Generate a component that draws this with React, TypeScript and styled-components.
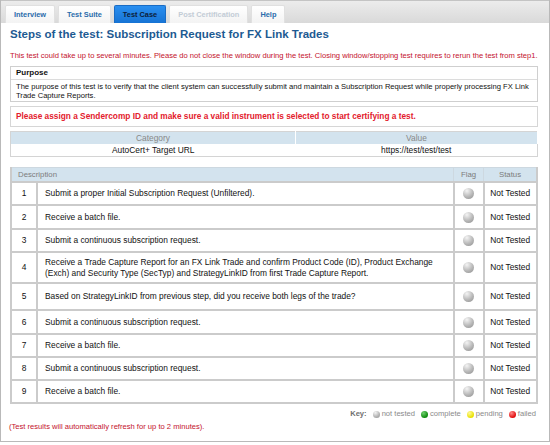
import styled, { createGlobalStyle } from 'styled-components';

const GlobalStyle = createGlobalStyle`
  html, body {
    margin: 0;
    padding: 0;
    background: #fff;
  }
  body {
    font-family: "Liberation Sans", Arial, sans-serif;
    color: #111;
  }
`;

const Frame = styled.div`
  width: 550px;
  height: 442px;
  box-sizing: border-box;
  border: 1px solid #b9b9b9;
  border-top: none;
  display: flex;
  flex-direction: column;
  overflow: hidden;
`;

const TabBar = styled.div`
  flex-shrink: 0;
  height: 23px;
  box-sizing: border-box;
  padding: 4px 0 0 4px;
  display: flex;
  gap: 3px;
  align-items: stretch;
  background: linear-gradient(#ececec, #d9d9d9);
  border-top: 1px solid #c4c4c4;
`;

const Tab = styled.div<{ $state?: 'active' | 'disabled' }>`
  padding: 0 8px;
  display: flex;
  align-items: center;
  font-size: 7.4px;
  font-weight: bold;
  border-radius: 2px 2px 0 0;
  color: ${(p) => (p.$state === 'active' ? '#0c1d3a' : p.$state === 'disabled' ? '#c3ccd6' : '#2b6cab')};
  background: ${(p) => (p.$state === 'active' ? 'linear-gradient(#2a8ff0, #1673d4)' : 'linear-gradient(#ffffff, #f3f3f3)')};
  border: 1px solid ${(p) => (p.$state === 'active' ? '#1a6cc4' : '#e0e0e0')};
  border-bottom: none;
`;

const Content = styled.div`
  flex: 1;
  padding: 0 11px 0 9px;
  display: flex;
  flex-direction: column;
`;

const Title = styled.h1`
  margin: 4px 0 0 0;
  font-size: 11.5px;
  font-weight: bold;
  color: #1d5a92;
  line-height: 14px;
`;

const Warning = styled.p`
  margin: 10px 0 0 0;
  font-size: 7.6px;
  line-height: 10px;
  color: #c4122d;
`;

const Box = styled.div`
  margin-top: 5px;
  border: 1px solid #cfcfcf;
`;

const BoxHead = styled.div`
  font-size: 8px;
  font-weight: bold;
  padding: 1px 5px;
  line-height: 10px;
  border-bottom: 1px solid #dcdcdc;
`;

const BoxText = styled.div`
  font-size: 7.6px;
  line-height: 9px;
  padding: 2px 5px 1px;
`;

const Notice = styled.div`
  margin-top: 4px;
  border: 1px solid #d6d6d6;
  padding: 4px 5px;
  font-size: 8.3px;
  font-weight: bold;
  line-height: 11px;
  color: #e3202c;
`;

const InfoTable = styled.table`
  margin-top: 4px;
  width: 100%;
  border-collapse: collapse;
  border: 1px solid #d4d4d4;
  font-size: 8.4px;
`;

const InfoHead = styled.th<{ $w?: number }>`
  background: #d3e3ee;
  color: #888;
  font-weight: normal;
  height: 12px;
  padding: 0;
  border-right: 1px solid #fff;
  width: ${(p) => (p.$w ? `${p.$w}px` : 'auto')};
`;

const InfoCell = styled.td`
  text-align: center;
  height: 12px;
  padding: 0;
`;

const Steps = styled.table`
  margin-top: 10px;
  width: 100%;
  border-collapse: collapse;
  font-size: 8.4px;
  border: 2px solid #cbcbcb;
  border-top: none;
`;

const StepHead = styled.th<{ $align?: string; $w?: number }>`
  background: #d3e3ee;
  color: #7c7c7c;
  font-weight: normal;
  font-size: 7.8px;
  text-align: ${(p) => p.$align || 'center'};
  padding: 0 0 0 ${(p) => (p.$align === 'left' ? '6px' : '0')};
  height: 13px;
  border: 1px solid #cdd8e0;
  width: ${(p) => (p.$w ? `${p.$w}px` : 'auto')};
`;

const Cell = styled.td<{ $center?: boolean }>`
  border: 2px solid #cbcbcb;
  padding: 0 ${(p) => (p.$center ? '0' : '7px')};
  text-align: ${(p) => (p.$center ? 'center' : 'left')};
  line-height: 11px;
  vertical-align: middle;
`;

const Row = styled.tr<{ $h: number }>`
  height: ${(p) => p.$h}px;
  background: #fff;
`;

const Ball = styled.span<{ $color?: string; $size?: number }>`
  display: inline-block;
  width: ${(p) => p.$size || 11}px;
  height: ${(p) => p.$size || 11}px;
  border-radius: 50%;
  vertical-align: middle;
  background: ${(p) =>
    p.$color === 'green'
      ? 'radial-gradient(circle at 35% 30%, #6fd06f, #0d8a0d 70%)'
      : p.$color === 'yellow'
      ? 'radial-gradient(circle at 35% 30%, #fffa9a, #e8e000 70%)'
      : p.$color === 'red'
      ? 'radial-gradient(circle at 35% 30%, #ff8c8c, #e00b0b 70%)'
      : 'radial-gradient(circle at 35% 25%, #f4f4f4, #b8b8b8 55%, #8d8d8d 100%)'};
`;

const KeyRow = styled.div`
  margin-top: 5px;
  display: flex;
  justify-content: flex-end;
  align-items: center;
  gap: 4px;
  font-size: 7.6px;
  line-height: 10px;
  color: #8a8a8a;
`;

const KeyLabel = styled.span`
  font-weight: bold;
  color: #6f6f6f;
  margin-right: 2px;
`;

const KeyItem = styled.span`
  display: inline-flex;
  align-items: center;
  gap: 2px;
  margin-right: 2px;
`;

const Footer = styled.p`
  margin: 3px 0 0 -1px;
  font-size: 7.6px;
  line-height: 10px;
  color: #c4122d;
`;

const steps: { text: string; h: number }[] = [
  { text: 'Submit a proper Initial Subscription Request (Unfiltered).', h: 23 },
  { text: 'Receive a batch file.', h: 24 },
  { text: 'Submit a continuous subscription request.', h: 23 },
  {
    text:
      'Receive a Trade Capture Report for an FX Link Trade and confirm Product Code (ID), Product Exchange (Exch) and Security Type (SecTyp) and StrategyLinkID from first Trade Capture Report.',
    h: 31,
  },
  { text: 'Based on StrategyLinkID from previous step, did you receive both legs of the trade?', h: 27 },
  { text: 'Submit a continuous subscription request.', h: 24 },
  { text: 'Receive a batch file.', h: 23 },
  { text: 'Submit a continuous subscription request.', h: 23 },
  { text: 'Receive a batch file.', h: 23 },
];

export default function App() {
  return (
    <>
      <GlobalStyle />
      <Frame>
        <TabBar>
          <Tab>Interview</Tab>
          <Tab>Test Suite</Tab>
          <Tab $state="active">Test Case</Tab>
          <Tab $state="disabled">Post Certification</Tab>
          <Tab>Help</Tab>
        </TabBar>
        <Content>
          <Title>Steps of the test: Subscription Request for FX Link Trades</Title>
          <Warning>
            This test could take up to several minutes. Please do not close the window during the test. Closing
            window/stopping test requires to rerun the test from step1.
          </Warning>

          <Box>
            <BoxHead>Purpose</BoxHead>
            <BoxText>
              The purpose of this test is to verify that the client system can successfully submit and maintain a
              Subscription Request while properly processing FX Link Trade Capture Reports.
            </BoxText>
          </Box>

          <Notice>Please assign a Sendercomp ID and make sure a valid instrument is selected to start certifying a test.</Notice>

          <InfoTable>
            <thead>
              <tr>
                <InfoHead $w={284}>Category</InfoHead>
                <InfoHead>Value</InfoHead>
              </tr>
            </thead>
            <tbody>
              <tr>
                <InfoCell>AutoCert+ Target URL</InfoCell>
                <InfoCell>https://test/test/test</InfoCell>
              </tr>
            </tbody>
          </InfoTable>

          <Steps>
            <thead>
              <tr>
                <StepHead $align="left" colSpan={2}>
                  Description
                </StepHead>
                <StepHead $w={29}>Flag</StepHead>
                <StepHead $w={52}>Status</StepHead>
              </tr>
            </thead>
            <tbody>
              {steps.map((s, i) => (
                <Row key={i} $h={s.h}>
                  <Cell $center style={{ width: 24 }}>
                    {i + 1}
                  </Cell>
                  <Cell>{s.text}</Cell>
                  <Cell $center>
                    <Ball />
                  </Cell>
                  <Cell $center>Not Tested</Cell>
                </Row>
              ))}
            </tbody>
          </Steps>

          <KeyRow>
            <KeyLabel>Key:</KeyLabel>
            <KeyItem>
              <Ball $size={7} /> not tested
            </KeyItem>
            <KeyItem>
              <Ball $size={7} $color="green" /> complete
            </KeyItem>
            <KeyItem>
              <Ball $size={7} $color="yellow" /> pending
            </KeyItem>
            <KeyItem>
              <Ball $size={7} $color="red" /> failed
            </KeyItem>
          </KeyRow>

          <Footer>(Test results will automatically refresh for up to 2 minutes).</Footer>
        </Content>
      </Frame>
    </>
  );
}
